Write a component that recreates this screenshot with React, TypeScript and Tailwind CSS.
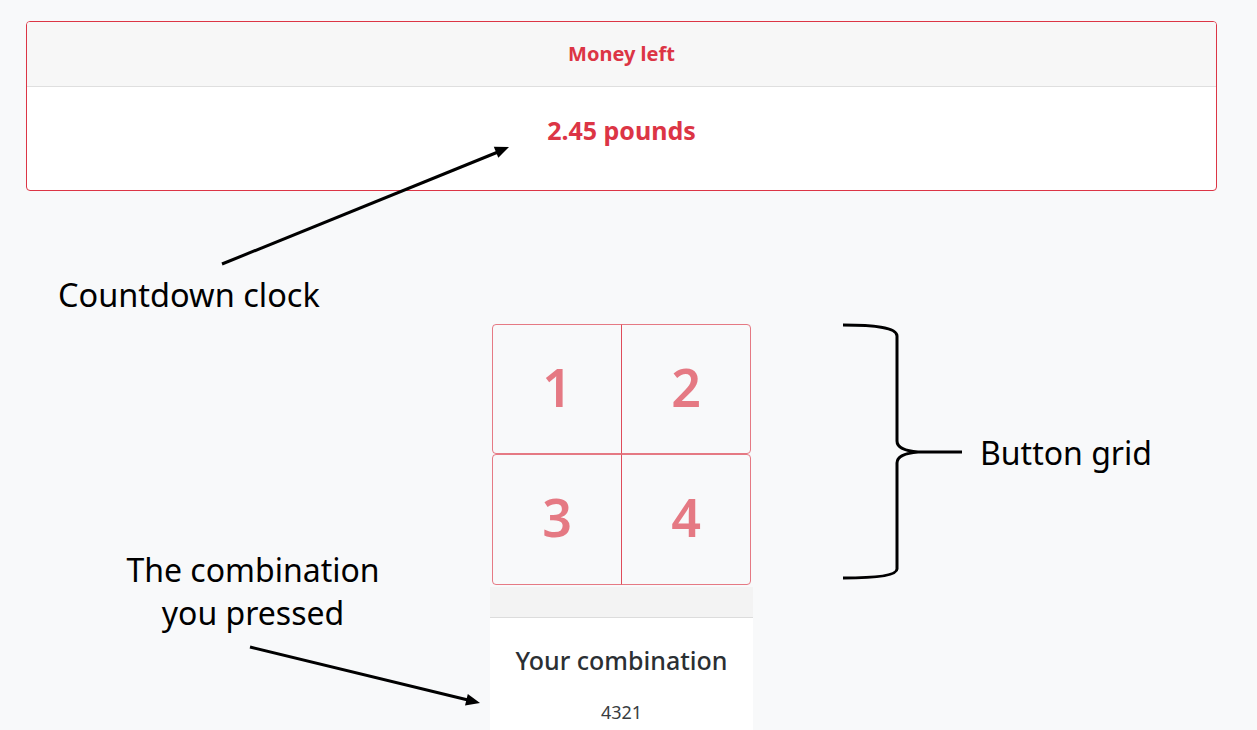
import React from "react";

const ui = { fontFamily: '"Noto Sans", "Open Sans", sans-serif' };

function Btn({ n, pos, h }: { n: string; pos: "l" | "r"; h: "a" | "b" }) {
  const r = pos === "l" ? "rounded-l-[4px]" : "rounded-r-[4px] -ml-px";
  const hh = h === "a" ? "h-[130px]" : "h-[131px]";
  return (
    <button
      disabled
      className={`w-[130px] ${hh} border border-[#dc3545] text-[#dc3545] opacity-65 bg-transparent flex items-center justify-center pb-[5px] text-[52px] font-semibold leading-none ${r}`}
      style={ui}
    >
      {n}
    </button>
  );
}

export default function App() {
  return (
    <div className="relative w-full h-[730px] overflow-hidden bg-[#f8f9fa]" style={ui}>
      <div className="pt-[21px]">
        <div className="ml-[26px] w-[1191px] border border-[#dc3545] rounded-[4px] overflow-hidden bg-white">
          <div className="h-[65px] bg-[#f7f7f7] border-b border-[#dfdfdf] flex items-center justify-center">
            <span className="text-[20px] font-bold text-[#dc3545] leading-none">Money left</span>
          </div>
          <div className="h-[103px] pt-[26px] flex justify-center">
            <span className="text-[25px] font-bold text-[#dc3545] leading-[34px]">2.45 pounds</span>
          </div>
        </div>

        <div className="ml-[26px] w-[1191px] mt-[133px] flex flex-col items-center">
          <div className="flex flex-col">
            <div className="flex">
              <Btn n="1" pos="l" h="a" />
              <Btn n="2" pos="r" h="a" />
            </div>
            <div className="flex">
              <Btn n="3" pos="l" h="b" />
              <Btn n="4" pos="r" h="b" />
            </div>
          </div>
          <div className="w-[263px] mt-[2px]">
            <div className="h-[31px] bg-[#f3f3f3] border-b border-[#dcdcdc]" />
            <div className="bg-white h-[200px] flex flex-col items-center pt-[28px]">
              <div className="text-[25px] font-medium leading-[29px] text-[#2b2f33]">Your combination</div>
              <div className="mt-[24px] text-[18px] leading-[27px] text-[#3a3d40]">4321</div>
            </div>
          </div>
        </div>
      </div>

      {/* annotations */}
      <svg
        className="absolute inset-0 pointer-events-none"
        width="1257"
        height="730"
        viewBox="0 0 1257 730"
      >
        <line x1="222" y1="264" x2="498" y2="152" stroke="#000" strokeWidth="3" />
        <polygon points="509,147 498.3,157.8 493.8,146.7" fill="#000" />
        <line x1="250" y1="647" x2="468" y2="700" stroke="#000" strokeWidth="3" />
        <polygon points="480,703 465,705.5 467.8,693.9" fill="#000" />
        <path
          d="M843 325 C 872 325, 897 327, 897 336 L 897 441 C 897 448, 906 451, 918 452 L 962 452 M 918 452 C 906 453, 897 456, 897 463 L 897 569 C 897 576, 872 578, 843 578"
          fill="none"
          stroke="#000"
          strokeWidth="3"
        />
      </svg>

      <div className="absolute left-[58px] top-[279px] text-[32.5px] leading-[32px] text-black whitespace-nowrap">
        Countdown clock
      </div>
      <div className="absolute left-[980px] top-[437px] text-[32px] leading-[32px] text-black whitespace-nowrap">
        Button grid
      </div>
      <div className="absolute left-[103px] top-[548px] w-[300px] text-center text-[32px] leading-[43px] text-black">
        The combination
        <br />
        you pressed
      </div>
    </div>
  );
}
